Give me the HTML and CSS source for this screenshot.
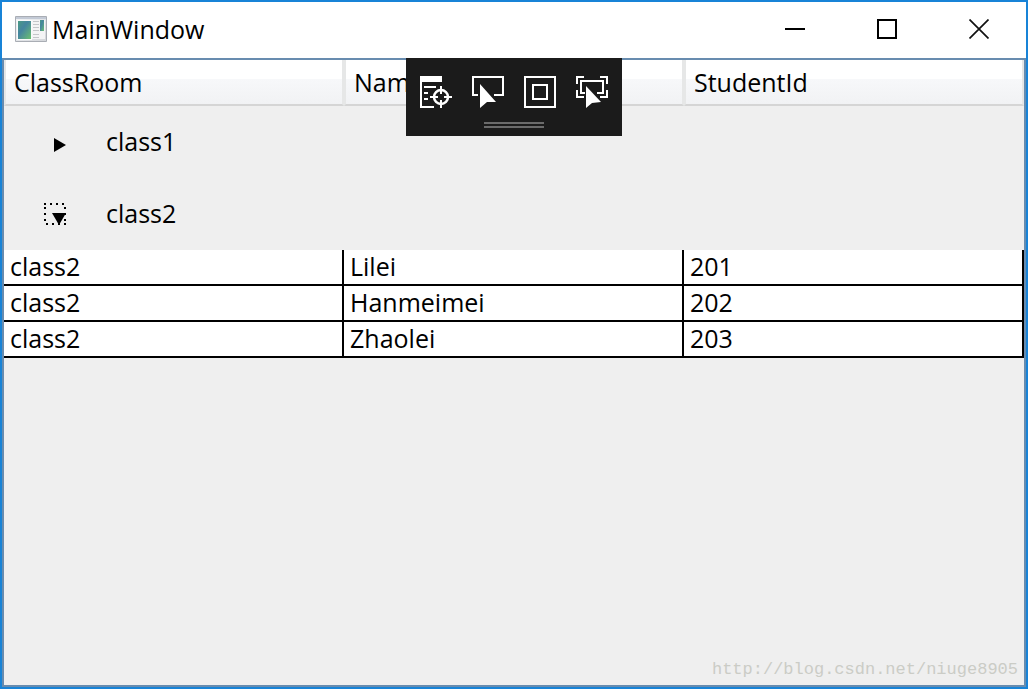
FILE: index.html
```html
<!DOCTYPE html>
<html lang="en">
<head>
<meta charset="utf-8">
<title>MainWindow</title>
<link rel="stylesheet" href="styles.css">
</head>
<body>
<div class="window">
  <header class="titlebar">
    <svg class="app-icon" width="32" height="26" viewBox="0 0 32 26" aria-hidden="true">
      <defs>
        <linearGradient id="pane" x1="0" y1="0" x2="1" y2="1"><stop offset="0" stop-color="#4a9a82"/><stop offset="0.4" stop-color="#4585a0"/><stop offset="1" stop-color="#6bc070"/></linearGradient>
        <linearGradient id="frame" x1="0" y1="0" x2="1" y2="1"><stop offset="0" stop-color="#f4f5f7"/><stop offset="1" stop-color="#d3d6da"/></linearGradient>
      </defs>
      <path d="M0.500 0.500H31.500V25.500H0.500z" fill="url(#frame)" stroke="#a9adb4"/>
      <path d="M1 1H31V3H1z" fill="#c3cad6"/>
      <path d="M2 4H17V24H2z" fill="#fafafa"/>
      <path d="M3 5H16V23H3z" fill="url(#pane)"/>
      <path d="M17 4H30V23H17z" fill="#f4f4f5"/>
      <path d="M18 5.500H24M18 8.500H24M18 11.500H24M18 14.500H24M18 18.500H24M18 21.500H24" stroke="#c4c6c9"/>
      <path d="M25 4H29V15H25z" fill="url(#pane)"/>
    </svg>
    <h1 class="title">MainWindow</h1>
    <div class="window-buttons">
      <button class="window-button" type="button" aria-label="Minimize"><svg width="20" height="20" viewBox="0 0 20 20"><path d="M0 10H20" stroke="#000" stroke-width="2"/></svg></button>
      <button class="window-button" type="button" aria-label="Maximize"><svg width="20" height="20" viewBox="0 0 20 20"><path d="M1 1H19V19H1z" fill="none" stroke="#000" stroke-width="2"/></svg></button>
      <button class="window-button" type="button" aria-label="Close"><svg width="20" height="20" viewBox="0 0 20 20"><path d="M0.500 0.500L19.500 19.500M19.500 0.500L0.500 19.500" stroke="#111" stroke-width="1.700"/></svg></button>
    </div>
  </header>
  <main class="client">
    <table class="grid">
      <thead>
        <tr><th scope="col">ClassRoom</th><th scope="col">Name</th><th scope="col">StudentId</th></tr>
      </thead>
      <tbody>
        <tr class="group"><th colspan="3" scope="rowgroup"><div class="group-head">
          <button class="expander" type="button" aria-expanded="false" aria-labelledby="group1"><svg width="24" height="24" viewBox="0 0 24 24"><path d="M10 9L22 16L10 23z"/></svg></button>
          <span id="group1">class1</span></div></th></tr>
      </tbody>
      <tbody>
        <tr class="group"><th colspan="3" scope="rowgroup"><div class="group-head">
          <button class="expander" type="button" aria-expanded="true" aria-labelledby="group2"><svg width="24" height="24" viewBox="0 0 24 24"><path d="M0 3H22M21 6V24M22 23H0M1 6V24" fill="none" stroke="#000" stroke-width="2" stroke-dasharray="2 4"/><path d="M8 12H22L15 24z"/></svg></button>
          <span id="group2">class2</span></div></th></tr>
        <tr class="row"><td>class2</td><td>Lilei</td><td>201</td></tr>
        <tr class="row"><td>class2</td><td>Hanmeimei</td><td>202</td></tr>
        <tr class="row"><td>class2</td><td>Zhaolei</td><td>203</td></tr>
      </tbody>
    </table>
    <a class="watermark" href="http://blog.csdn.net/niuge8905">http://blog.csdn.net/niuge8905</a>
  </main>
  <div class="debug-bar" role="toolbar" aria-label="Debug tools">
    <div class="tools">
      <button class="tool" type="button" aria-label="Go to live visual tree"><svg width="32" height="32" viewBox="0 0 32 32"><path d="M0 0H22V6H0z" fill="#fff"/><path d="M1 0V31H14M4 11H16M4 17H8M4 23H8" fill="none" stroke="#fff" stroke-width="2"/><circle cx="21" cy="21" r="7" fill="none" stroke="#fff" stroke-width="2.500"/><path d="M21 10V18M21 24V32M10 21H18M24 21H32" stroke="#fff" stroke-width="2"/></svg></button>
      <button class="tool" type="button" aria-label="Enable selection"><svg width="32" height="32" viewBox="0 0 32 32"><path d="M6 19H1V1H31V19H22" fill="none" stroke="#fff" stroke-width="2"/><path d="M8 8L24 26L15 26L8 32z" fill="#fff"/></svg></button>
      <button class="tool" type="button" aria-label="Display layout adorners"><svg width="32" height="32" viewBox="0 0 32 32"><path d="M1 1H31V31H1zM9 9H23V23H9z" fill="none" stroke="#fff" stroke-width="2"/></svg></button>
      <button class="tool" type="button" aria-label="Track focused element"><svg width="32" height="32" viewBox="0 0 32 32"><path d="M1 8V1H8M24 1H31V8M31 14V21H24M8 21H1V14M9 17H5V5H27V17H21" fill="none" stroke="#fff" stroke-width="2"/><path d="M10 10L25 26L16 27L10 32z" fill="#fff"/></svg></button>
    </div>
    <div class="grip"></div>
  </div>
</div>
</body>
</html>
```
FILE: styles.css
```css
* { box-sizing: border-box; }

body {
  margin: 0;
  font: 25px/34px "Open Sans", "Noto Sans", sans-serif;
  color: #000;
}

button {
  display: flex;
  align-items: center;
  justify-content: center;
  padding: 0;
  border: 0;
  background: none;
}

.window {
  position: relative;
  display: flex;
  flex-direction: column;
  min-height: 100vh;
  border: 2px solid #1883d7;
  background: #fff;
}

.titlebar {
  display: flex;
  align-items: center;
  height: 56px;
  padding: 0 1px 2px 13px;
}

.app-icon { margin-right: 5px; }

.title {
  margin: 0;
  font-size: 25px;
  font-weight: 400;
}

.window-buttons {
  display: flex;
  margin-left: auto;
}

.window-button {
  width: 92px;
  height: 54px;
}

.client {
  display: flex;
  flex: 1;
  flex-direction: column;
  border: 2px solid #688caf;
  background: #efefef;
}

.grid {
  width: 100%;
  table-layout: fixed;
  border-spacing: 0;
}

.grid th {
  padding: 0;
  font-weight: 400;
  text-align: left;
}

.grid thead th {
  height: 46px;
  padding: 0 8px;
  border: solid #e6e7e7;
  border-width: 0 2px 2px;
  border-bottom-color: #d5d5d5;
  background: linear-gradient(#fff 0 43%, #f7f8fa 43%, #f1f2f4);
}

.group-head {
  display: flex;
  align-items: center;
  gap: 38px;
  height: 72px;
  padding: 0 0 2px 40px;
}

.expander {
  width: 24px;
  height: 24px;
}

.row td {
  padding: 0 6px 2px;
  border-right: 2px solid #000;
  border-bottom: 2px solid #000;
  background: #fff;
  line-height: 32px;
}

.watermark {
  align-self: flex-end;
  margin-top: auto;
  padding: 0 6px 3px 0;
  font: 17px/24px "Liberation Mono", monospace;
  color: #cbccc6;
  text-decoration: none;
}

.debug-bar {
  position: absolute;
  top: 56px;
  left: 50%;
  display: flex;
  flex-direction: column;
  align-items: center;
  gap: 14px;
  width: 216px;
  height: 78px;
  margin-left: -108px;
  padding-top: 18px;
  background: #1b1b1b;
}

.tools {
  display: flex;
  gap: 20px;
}

.grip {
  width: 60px;
  height: 6px;
  border: solid #6b6b6b;
  border-width: 2px 0;
}
```
